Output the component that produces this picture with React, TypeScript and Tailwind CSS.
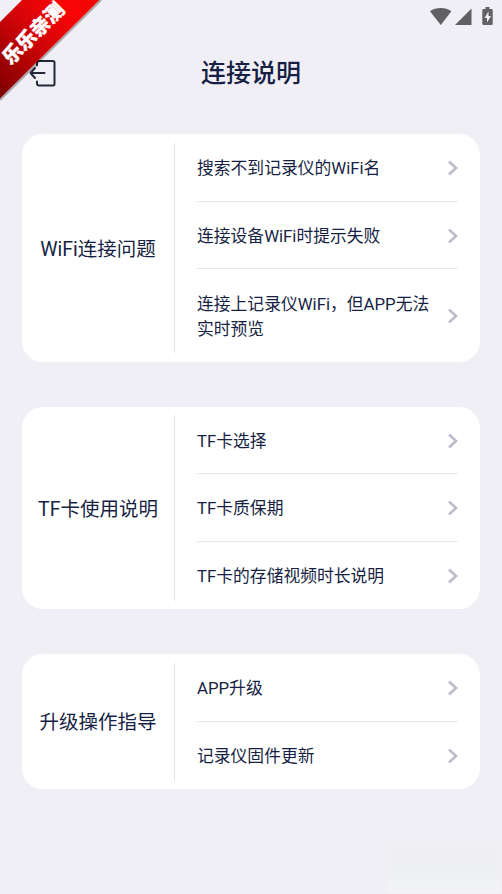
import React from "react";

interface HelpSection {
  title: string;
  items: string[];
}

const sections: HelpSection[] = [
  {
    title: "WiFi连接问题",
    items: ["搜索不到记录仪的WiFi名", "连接设备WiFi时提示失败", "连接上记录仪WiFi，但APP无法实时预览"],
  },
  {
    title: "TF卡使用说明",
    items: ["TF卡选择", "TF卡质保期", "TF卡的存储视频时长说明"],
  },
  {
    title: "升级操作指导",
    items: ["APP升级", "记录仪固件更新"],
  },
];

const StatusBar: React.FC = () => (
  <div className="flex h-8 items-start justify-end pt-[7px] pr-2">
    <svg width="64" height="19" viewBox="0 0 64 19" fill="#616063">
      {/* wifi */}
      <path d="M0 4.2C3 2 6.6 1 10.8 1s7.600 1 10.600 3.200L10.800 18z" />
      {/* signal */}
      <path d="M25 18L41.500 1.500V18z" />
      {/* battery */}
      <path d="M55.500 0h4v2h2a1.200 1.200 0 0 1 1.200 1.200v13.600a1.200 1.200 0 0 1-1.200 1.200h-8a1.200 1.200 0 0 1-1.200-1.200v-13.600A1.200 1.200 0 0 1 53.500 2h2z" />
      <path d="M58.500 4.500l-4 6.500h2.500v4.500l4-6.500h-2.500z" fill="#f0eff5" />
    </svg>
  </div>
);

const Ribbon: React.FC = () => (
  <div className="pointer-events-none absolute top-0 left-0 h-[104px] w-[104px]">
    <svg className="absolute inset-0" width="104" height="104" viewBox="0 0 104 104">
      <defs>
        <linearGradient id="ribbon" gradientUnits="userSpaceOnUse" x1="0" y1="98" x2="99" y2="0">
          <stop offset="0" stopColor="#7c0000" />
          <stop offset="0.5" stopColor="#d30508" />
          <stop offset="0.8" stopColor="#fa0507" />
          <stop offset="1" stopColor="#ee0506" />
        </linearGradient>
      </defs>
      <path d="M0 100L101 0" stroke="#000" strokeOpacity="0.3" strokeWidth="2" />
      <path d="M22 0H99.500L0 98.500V22z" fill="url(#ribbon)" />
    </svg>
    <span className="absolute top-[25px] left-[-5px] w-[78px] -rotate-45 text-center text-[19.5px] leading-[18px] font-black text-white [-webkit-text-stroke:0.4px_white]">
      乐乐亲测
    </span>
  </div>
);

const Chevron: React.FC = () => (
  <svg className="mt-px -mb-px shrink-0" width="10" height="16" viewBox="0 0 10 16" fill="none" stroke="#bdbccd" strokeWidth="2.700">
    <path d="M1 1.500L8 8L1 14.500" />
  </svg>
);

const SectionCard: React.FC<HelpSection> = ({ title, items }) => (
  <section className="flex rounded-[21px] bg-white py-[8.5px] pr-[22.5px]">
    <h2 className="flex w-[152px] items-center justify-center pt-[3px] text-[19.5px]">{title}</h2>
    <div className="w-px bg-[#e3e3e6]" />
    <ul className="-my-[8.5px] ml-[22px] flex-1 divide-y divide-[#e7e7ea]">
      {items.map((item) => (
        <li key={item} className="flex items-center justify-between py-[20.75px] last:py-[21.25px]">
          <span className="mt-[1.5px] -mb-[1.5px] w-[236px] text-[16.8px] leading-[25px]">{item}</span>
          <Chevron />
        </li>
      ))}
    </ul>
  </section>
);

export default function App() {
  return (
    <main className="relative h-[894px] w-[502px] overflow-hidden bg-[#f0eff5] font-[Roboto,'Noto_Sans_CJK_SC',sans-serif] text-[#171f45]">
      <StatusBar />

      <header className="flex h-[82px] items-center px-[29px]">
        <button type="button" aria-label="返回" className="w-[27px]">
          <svg width="27" height="27" viewBox="0 0 27 27" fill="none" stroke="#232838" strokeWidth="2" strokeLinecap="round" strokeLinejoin="round">
            <path d="M8 5.500V2.500A1.500 1.500 0 0 1 9.500 1H24A1.500 1.500 0 0 1 25.500 2.500V24A1.500 1.500 0 0 1 24 25.500H10A2 2 0 0 1 8 23.500V21.500" />
            <path d="M15.500 13H1.500M6 8L1.500 13L6 18" />
          </svg>
        </button>
        <h1 className="mr-[27px] flex-1 pt-[2px] text-center text-[25px] font-medium">连接说明</h1>
      </header>

      <div className="flex flex-col gap-[45px] px-[22px] pt-5">
        {sections.map((section) => (
          <SectionCard key={section.title} {...section} />
        ))}
      </div>

      {/* Faded panel in the bottom corner */}
      <div className="absolute right-px bottom-px h-[50px] w-[114px] bg-linear-to-b from-[#efeff2] via-[#eeeff2] to-[#f3f4f8]" />

      <Ribbon />
    </main>
  );
}
